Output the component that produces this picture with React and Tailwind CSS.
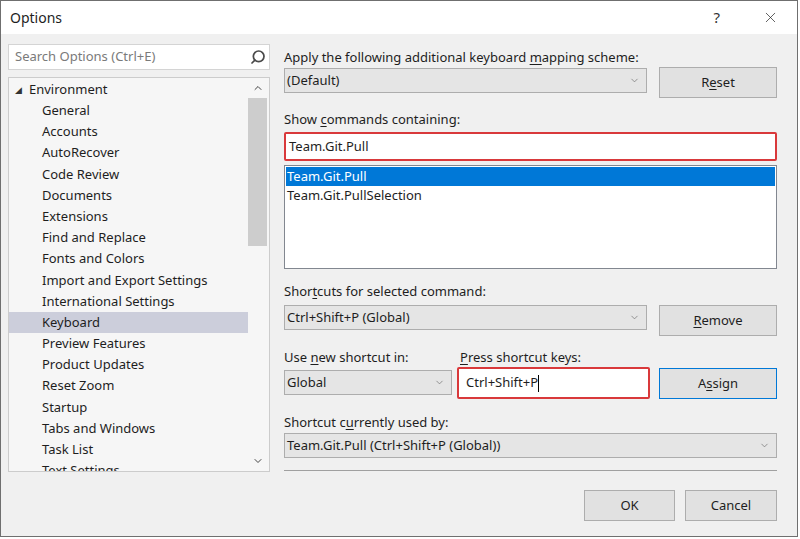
import { Search, ChevronDown, ChevronUp, X } from 'lucide-react'

const treeItems = [
  'General',
  'Accounts',
  'AutoRecover',
  'Code Review',
  'Documents',
  'Extensions',
  'Find and Replace',
  'Fonts and Colors',
  'Import and Export Settings',
  'International Settings',
  'Keyboard',
  'Preview Features',
  'Product Updates',
  'Reset Zoom',
  'Startup',
  'Tabs and Windows',
  'Task List',
  'Text Settings',
]

function Combo({ value, className = '' }) {
  return (
    <div
      className={`flex items-center justify-between h-[25px] bg-[#e5e5e5] border border-[#adadad] pl-[2px] pr-[6px] ${className}`}
    >
      <span className="leading-none">{value}</span>
      <ChevronDown size={11} strokeWidth={1.5} className="text-[#6d6d6d]" />
    </div>
  )
}

function Button({ children, className = '', focused = false }) {
  return (
    <button
      type="button"
      className={`h-[31px] bg-[#e1e1e1] border ${
        focused ? 'border-[#0078d7]' : 'border-[#adadad]'
      } text-[#1e1e1e] ${className}`}
    >
      {children}
    </button>
  )
}

export default function App() {
  return (
    <div className="w-[800px] h-[539px] bg-white font-['Noto_Sans',sans-serif] text-[13px] text-[#1e1e1e]">
      <div className="w-[798px] h-[537px] border border-[#6f6f6f] bg-[#f0f0f0] flex flex-col">
        {/* title bar */}
        <div className="h-[33px] bg-white flex items-center justify-between pl-[9px] pr-[18px] shrink-0">
          <span className="text-[14px]">Options</span>
          <div className="flex items-center gap-[42px]">
            <span className="text-[15px] text-[#333]">?</span>
            <X size={17} strokeWidth={1} className="text-[#222]" />
          </div>
        </div>

        <div className="flex flex-1">
          {/* left column */}
          <div className="w-[262px] ml-[7px] pt-[10px] flex flex-col">
            <div className="h-[26px] bg-white border border-[#d4d4d4] flex items-center justify-between pl-[6px] pr-[3px]">
              <span className="text-[#7a7a7a]">Search Options (Ctrl+E)</span>
              <Search size={16} strokeWidth={2.6} className="text-[#4a4a4a] -scale-x-100" />
            </div>
            <div className="mt-[7px] h-[395px] bg-[#f6f6f6] border border-[#cccccc] flex overflow-hidden">
              <div className="flex-1 pt-[1px] overflow-hidden">
                <div className="flex items-center h-[21.2px] pl-[6px]">
                  <span className="text-[9px] text-[#333] mr-[7px] leading-none">◢</span>
                  <span>Environment</span>
                </div>
                {treeItems.map((item) => (
                  <div
                    key={item}
                    className={`h-[21.2px] flex items-center pl-[33px] ${
                      item === 'Keyboard' ? 'bg-[#cccedb]' : ''
                    }`}
                  >
                    {item}
                  </div>
                ))}
              </div>
              <div className="w-[19px] mr-[2px] flex flex-col items-center">
                <div className="h-[20px] flex items-center justify-center">
                  <ChevronUp size={12} strokeWidth={2} className="text-[#444]" />
                </div>
                <div className="w-full h-[148px] bg-[#cdcdcd]" />
                <div className="flex-1" />
                <div className="h-[20px] flex items-center justify-center">
                  <ChevronDown size={12} strokeWidth={2} className="text-[#444]" />
                </div>
              </div>
            </div>
          </div>

          {/* right column */}
          <div className="w-[493px] ml-[14px] pt-[13px] flex flex-col">
            <div className="h-[20px] leading-[20px]">
              Apply the following additional keyboard <u className="underline-offset-2">m</u>apping scheme:
            </div>
            <div className="flex items-start justify-between">
              <Combo value="(Default)" className="w-[363px] mt-[1px]" />
              <Button className="w-[118px]">
                R<u className="underline-offset-2">e</u>set
              </Button>
            </div>

            <div className="mt-[11px] h-[20px] leading-[20px]">
              Show <u className="underline-offset-2">c</u>ommands containing:
            </div>
            <div className="mt-[3px] h-[29px] bg-white border-2 border-[#d9393b] rounded-[2px] flex items-center pl-[3px]">
              Team.Git.Pull
            </div>
            <div className="mt-[4px] h-[104px] bg-white border border-[#828790] p-[1px]">
              <div className="h-[19px] bg-[#0078d7] text-white flex items-center pl-[1px]">Team.Git.Pull</div>
              <div className="h-[19px] flex items-center pl-[1px]">Team.Git.PullSelection</div>
            </div>

            <div className="mt-[12px] h-[20px] leading-[20px]">
              Shor<u className="underline-offset-2">t</u>cuts for selected command:
            </div>
            <div className="mt-[4px] flex items-start justify-between">
              <Combo value="Ctrl+Shift+P (Global)" className="w-[363px]" />
              <Button className="w-[118px] h-[30px]">
                <u className="underline-offset-2">R</u>emove
              </Button>
            </div>

            <div className="mt-[11px] flex h-[20px] leading-[20px]">
              <div className="w-[176px]">
                Use <u className="underline-offset-2">n</u>ew shortcut in:
              </div>
              <div>
                <u className="underline-offset-2">P</u>ress shortcut keys:
              </div>
            </div>
            <div className="flex items-start">
              <Combo value="Global" className="w-[168px] mt-[3px]" />
              <div className="ml-[5px] w-[193px] h-[32px] bg-white border-2 border-[#d9393b] rounded-[2px] flex items-center pl-[7px]">
                Ctrl+Shift+P<span className="inline-block w-px h-[17px] bg-black" />
              </div>
              <div className="flex-1" />
              <Button focused className="w-[118px] mt-[1px]">
                A<u className="underline-offset-2">s</u>sign
              </Button>
            </div>

            <div className="mt-[13px] h-[20px] leading-[20px]">
              Shortcut c<u className="underline-offset-2">u</u>rrently used by:
            </div>
            <Combo value="Team.Git.Pull (Ctrl+Shift+P (Global))" className="mt-[1px]" />

            <div className="mt-[12px] h-px bg-[#a0a0a0]" />

            <div className="mt-[19px] flex justify-end gap-[10px]">
              <Button className="w-[91px]">OK</Button>
              <Button className="w-[92px]">Cancel</Button>
            </div>
          </div>
        </div>
      </div>
    </div>
  )
}
